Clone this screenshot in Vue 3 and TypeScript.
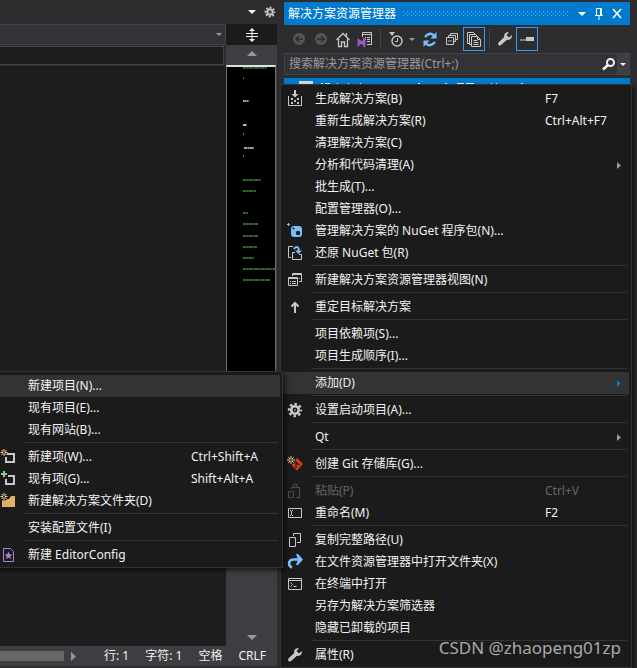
<script setup lang="ts">
interface MenuEntry {
  label: string
  icon?: string
  keys?: string
  disabled?: boolean
  more?: boolean
  active?: boolean
  children?: MenuEntry[][]
}

const addMenu: MenuEntry[][] = [
  [
    { label: '新建项目(N)...', active: true },
    { label: '现有项目(E)...' },
    { label: '现有网站(B)...' },
  ],
  [
    { label: '新建项(W)...', icon: 'new-item', keys: 'Ctrl+Shift+A' },
    { label: '现有项(G)...', icon: 'existing-item', keys: 'Shift+Alt+A' },
    { label: '新建解决方案文件夹(D)', icon: 'new-folder' },
  ],
  [{ label: '安装配置文件(I)' }],
  [{ label: '新建 EditorConfig', icon: 'editorconfig' }],
]

const mainMenu: MenuEntry[][] = [
  [
    { label: '生成解决方案(B)', icon: 'build', keys: 'F7' },
    { label: '重新生成解决方案(R)', keys: 'Ctrl+Alt+F7' },
    { label: '清理解决方案(C)' },
    { label: '分析和代码清理(A)', more: true },
    { label: '批生成(T)...' },
    { label: '配置管理器(O)...' },
    { label: '管理解决方案的 NuGet 程序包(N)...', icon: 'nuget' },
    { label: '还原 NuGet 包(R)', icon: 'restore' },
  ],
  [{ label: '新建解决方案资源管理器视图(N)', icon: 'new-view' }],
  [{ label: '重定目标解决方案', icon: 'up' }],
  [{ label: '项目依赖项(S)...' }, { label: '项目生成顺序(I)...' }],
  [{ label: '添加(D)', more: true, active: true, children: addMenu }],
  [{ label: '设置启动项目(A)...', icon: 'gear' }],
  [{ label: 'Qt', more: true }],
  [{ label: '创建 Git 存储库(G)...', icon: 'git' }],
  [
    { label: '粘贴(P)', icon: 'paste', keys: 'Ctrl+V', disabled: true },
    { label: '重命名(M)', icon: 'rename', keys: 'F2' },
  ],
  [
    { label: '复制完整路径(U)', icon: 'copy' },
    { label: '在文件资源管理器中打开文件夹(X)', icon: 'open' },
    { label: '在终端中打开', icon: 'terminal' },
    { label: '另存为解决方案筛选器' },
    { label: '隐藏已卸载的项目' },
  ],
  [{ label: '属性(R)', icon: 'wrench' }],
]

/* Code overview marks: x, y, width, colour */
const marks: [number, number, number, string][] = [
  [16, 0, 24, '#2f5a2b'],
  [16, 10, 1, '#3f7a3a'],
  [16, 33, 6, '#b58f80'],
  [16, 57, 4, '#b8b8b8'],
  [16, 66, 1, '#777777'],
  [17, 80, 10, '#b59a90'],
  [16, 88, 1, '#777777'],
  [16, 112, 18, '#2f6a2b'],
  [16, 123, 13, '#2f6a2b'],
  [16, 145, 5, '#2f6a2b'],
  [16, 156, 15, '#2f6a2b'],
  [16, 168, 15, '#2f6a2b'],
  [16, 179, 14, '#2f6a2b'],
  [16, 190, 11, '#2f6a2b'],
  [16, 201, 32, '#2f6a2b'],
  [16, 212, 27, '#2f6a2b'],
]
</script>

<template>
  <svg class="defs" aria-hidden="true">
    <symbol id="i-build" viewBox="0 0 16 16">
      <path d="M1.500 5v9.500h13V5" fill="none" stroke="#c8c8c8" />
      <path d="M7 -1h2v4h2.500L8 6.500 4.500 3H7zM4 7h2v2H4zM10 7h2v2h-2zM7 9h2v2H7zM4 11h2v2H4zM10 11h2v2h-2z" fill="#c8c8c8" />
    </symbol>
    <symbol id="i-nuget" viewBox="0 0 16 16">
      <path d="M7 3h5q3 0 3 3v5q0 3-3 3H7q-3 0-3-3V6q0-3 3-3z" fill="#75beff" />
      <circle cx="11" cy="10" r="2.200" fill="#1b1b1c" /><circle cx="6.500" cy="5.500" r="1" fill="#1b1b1c" />
      <path d="M1.500 0v3M0 1.500h3" stroke="#75beff" />
    </symbol>
    <symbol id="i-restore" viewBox="0 0 16 16">
      <path d="M6 1.500H1.500v11H4M8 7.500H5.500v7h9v-5H12" fill="none" stroke="#c8c8c8" />
      <path d="M7 4q2-3 4-1.500Q12 3.500 11.500 6" fill="none" stroke="#75beff" stroke-width="2" />
      <path d="M8 5.500h7l-3.500 3.500z" fill="#75beff" />
    </symbol>
    <symbol id="i-new-view" viewBox="0 0 16 16">
      <path d="M5.500 4V1.500h9v8H12M1.500 5.500h9v8h-9z" fill="none" stroke="#c8c8c8" />
      <path d="M5 2.500h10M1 6.500h10M3 9.500h1M5 9.500h4M3 11.500h1M5 11.500h4M12 6.500h1" stroke="#c8c8c8" />
    </symbol>
    <symbol id="i-up" viewBox="0 0 16 16">
      <path d="M8 14V4M4.500 7.500L8 4l3.500 3.500" fill="none" stroke="#c8c8c8" stroke-width="2" />
    </symbol>
    <symbol id="i-gear" viewBox="0 0 16 16">
      <circle cx="8" cy="8" r="3.700" fill="none" stroke="#c8c8c8" stroke-width="2.600" />
      <circle cx="8" cy="8" r="6" fill="none" stroke="#c8c8c8" stroke-width="2.400" stroke-dasharray="2.500 2.212" stroke-dashoffset="1.250" />
      <circle cx="8" cy="8" r="0.800" fill="#c8c8c8" />
    </symbol>
    <symbol id="i-git" viewBox="0 0 16 16">
      <path d="M10 2l6 6-6 6.500L4.500 9z" fill="#dd3a1c" />
      <path d="M9 5v7M9.500 7l3 2" stroke="#1b1b1c" stroke-width="1.300" />
      <circle cx="4" cy="4" r="4.500" fill="#1b1b1c" />
      <path d="M4 0v8M0 4h8M1.200 1.200l5.600 5.600M6.800 1.200L1.200 6.800" stroke="#ffcc8a" />
      <circle cx="4" cy="4" r="1" fill="#1b1b1c" />
    </symbol>
    <symbol id="i-paste" viewBox="0 0 16 16">
      <path d="M1.500 8.500h5v6h-5zM4.500 6V4.500h8v10H9M6.500 4V2.500h1V1h2v1.500h1V4" fill="none" stroke="#4c4c4c" />
    </symbol>
    <symbol id="i-rename" viewBox="0 0 16 16">
      <path d="M1.500 3.500h13v9h-13zM3 5.500h1M5 5.500h1M4.500 6v4M3 10.500h1M5 10.500h1" fill="none" stroke="#c8c8c8" />
    </symbol>
    <symbol id="i-copy" viewBox="0 0 16 16">
      <path d="M2.500 5.500h6v9h-6zM6.500 4V1.500h7v9H10" fill="none" stroke="#c8c8c8" />
    </symbol>
    <symbol id="i-open" viewBox="0 0 16 16">
      <path d="M5 13.500C1 12 1 6 6 5.500h6" fill="none" stroke="#75beff" stroke-width="2.600" />
      <path d="M9 0h2l5 5.500-5 5.500H9l2-5.500z" fill="#75beff" />
    </symbol>
    <symbol id="i-terminal" viewBox="0 0 16 16">
      <path d="M1.500 2.500h13v11h-13zM1 4.500h14M3.500 6.500l2 2-2 2M6.500 10.500h3" fill="none" stroke="#c8c8c8" />
    </symbol>
    <symbol id="i-wrench" viewBox="0 0 16 16">
      <path d="M14.600 4L12 6.500 9.500 4 12 1.400C9.500.4 6.500 2.500 7.200 6L1.500 11.500q-1 1.500 0 2.500t2.500 0L10 8.800C13.500 9.500 15.600 6.500 14.600 4z" fill="#c8c8c8" />
    </symbol>
    <symbol id="i-new-item" viewBox="0 0 16 16">
      <path d="M7 5h7v8H6V8" fill="none" stroke="#c8c8c8" stroke-width="2" />
      <path d="M4 0v7M.5 3.500h7M1.500 1l5 5M6.500 1l-5 5" stroke="#ffcc8a" />
      <circle cx="4" cy="3.500" r="1" fill="#1b1b1c" />
    </symbol>
    <symbol id="i-existing-item" viewBox="0 0 16 16">
      <path d="M8 5h6v8H6V8" fill="none" stroke="#c8c8c8" stroke-width="2" />
      <path d="M4 0v6M1 3h6" stroke="#89d185" stroke-width="2" />
    </symbol>
    <symbol id="i-new-folder" viewBox="0 0 16 16">
      <path d="M2 6h7l2-3h4v11H2z" fill="#dcb067" />
      <circle cx="4" cy="3.500" r="4" fill="#1b1b1c" />
      <path d="M4 0v7M.5 3.500h7M1.500 1l5 5M6.500 1l-5 5" stroke="#ffcc8a" />
      <circle cx="4" cy="3.500" r="1" fill="#1b1b1c" />
    </symbol>
    <symbol id="i-editorconfig" viewBox="0 0 16 16">
      <path d="M3.500 1.500h7l3 3v10h-10z" fill="none" stroke="#b180d7" />
      <path d="M8.500 4.500l1.200 2.700 2.800.2-2.200 1.800.8 2.800-2.600-1.600-2.600 1.600.8-2.800-2.200-1.800 2.800-.2z" fill="#b180d7" />
    </symbol>
  </svg>

  <main class="ide">
    <section class="editor">
      <header class="tabs">
        <button type="button" class="bare" aria-label="Tabs"><svg width="8" height="4"><path d="M0 0h8L4 4z" fill="#f1f1f1" /></svg></button>
        <button type="button" class="bare" aria-label="Options"><svg width="12" height="12"><use href="#i-gear" /></svg></button>
      </header>
      <div class="editor-body">
        <div class="code">
          <button type="button" class="scope" aria-label="Scope"><svg width="6" height="3"><path d="M0 0h6L3 3z" fill="#999" /></svg></button>
          <div class="field"></div>
          <div class="text"></div>
        </div>
        <div class="overview">
          <button type="button" class="split" aria-label="Split">
            <svg width="12" height="14"><path d="M0 5.500h12M0 8.500h12M6 2v10" fill="none" stroke="#f1f1f1" /><path d="M6 0l3 3H3zM6 14l3-3H3z" fill="#f1f1f1" /></svg>
          </button>
          <button type="button" class="arrow" aria-label="Up"><svg width="10" height="5"><path d="M5 0l5 5H0z" fill="#999" /></svg></button>
          <div class="map">
            <svg width="48" height="300">
              <template v-for="(m, i) in marks" :key="i">
                <rect :x="m[0]" :y="m[1]" :width="m[2]" height="2" :fill="m[3]" opacity="0.6" />
                <line :x1="m[0]" :x2="m[0] + m[2]" :y1="m[1] + 1" :y2="m[1] + 1" :stroke="m[3]" stroke-width="2" stroke-dasharray="3 1 1 1" />
              </template>
            </svg>
          </div>
          <button type="button" class="arrow low" aria-label="Down"><svg width="10" height="5"><path d="M0 0h10L5 5z" fill="#999" /></svg></button>
        </div>
      </div>
      <footer class="status">
        <div class="thumb"></div>
        <svg class="right" width="5" height="9"><path d="M0 0l5 4.500L0 9z" fill="#999" /></svg>
        <span class="cell">行: 1</span><span class="cell">字符: 1</span><span class="cell">空格</span><span>CRLF</span>
      </footer>
    </section>

    <section class="explorer">
      <header class="title">
        <h1>解决方案资源管理器</h1>
        <svg class="grip" height="6">
          <defs><pattern id="dots" width="4" height="4" patternUnits="userSpaceOnUse"><path d="M0 0h1v1H0zM2 2h1v1H2z" fill="#59a8de" /></pattern></defs>
          <rect width="100%" height="5" fill="url(#dots)" />
        </svg>
        <button type="button" class="bare" aria-label="Menu"><svg width="8" height="4"><path d="M0 0h8L4 4z" fill="#fff" /></svg></button>
        <button type="button" class="bare" aria-label="Pin"><svg width="8" height="12"><path d="M1.500 7V.5h5V7M5.500 0v7M0 7.500h8M4 8v4" fill="none" stroke="#fff" /></svg></button>
        <button type="button" class="bare" aria-label="Close"><svg width="10" height="9"><path d="M1 0l8 9M9 0L1 9" stroke="#fff" stroke-width="1.600" /></svg></button>
      </header>
      <div class="tools">
        <button type="button" aria-label="Back" class="tool"><svg width="14" height="14"><circle cx="7" cy="7" r="6" fill="#555558" /><path d="M11 7H4M7 4L4 7l3 3" fill="none" stroke="#2d2d30" stroke-width="1.500" /></svg></button>
        <button type="button" aria-label="Forward" class="tool"><svg width="14" height="14"><circle cx="7" cy="7" r="6" fill="#555558" /><path d="M3 7h7M7 4l3 3-3 3" fill="none" stroke="#2d2d30" stroke-width="1.500" /></svg></button>
        <button type="button" aria-label="Home" class="tool"><svg width="14" height="15"><path d="M.5 8L7 1.500 13.500 8M2.500 7v7.500h3V10h3v4.500h3V7M10.500 4V1" fill="none" stroke="#c8c8c8" stroke-width="1.300" /></svg></button>
        <button type="button" aria-label="Switch views" class="tool"><svg width="16" height="15"><path d="M5.500 5V.5h9v12H10M5 2.500h10M8 5.500h1M10 5.500h3M8 7.500h1M10 7.500h3M10 9.500h3" fill="none" stroke="#c8c8c8" /><path d="M1.500 8v5l6-5v5zM7 6v9" fill="none" stroke="#9b5ccc" stroke-width="1.800" /></svg></button>
        <i class="divider"></i>
        <button type="button" aria-label="Pending changes" class="tool"><svg width="14" height="15"><path d="M0 0h6L3 4z" fill="#c8c8c8" /><circle cx="8" cy="9" r="5" fill="none" stroke="#c8c8c8" stroke-width="1.400" /><path d="M8.500 6v3.500H6" fill="none" stroke="#c8c8c8" /></svg></button>
        <svg class="caret" width="6" height="3"><path d="M0 0h6L3 3z" fill="#999" /></svg>
        <button type="button" aria-label="Refresh" class="tool"><svg width="14" height="15"><path d="M2 5q5-6 9.500-1M12 10q-5 6-9.500 1" fill="none" stroke="#75beff" stroke-width="2.400" /><path d="M13.500 0v6.500H7.500zM.5 15V8.500h6z" fill="#75beff" /></svg></button>
        <button type="button" aria-label="Collapse" class="tool"><svg width="12" height="12"><path d="M4.500 3V.5h7v6H9M2.500 5V2.500h7v6H7.500M.5 4.500h7v7h-7z" fill="none" stroke="#c8c8c8" /><path d="M2 8h4" stroke="#75beff" /></svg></button>
        <button type="button" aria-label="Show all files" class="tool on"><svg width="16" height="15"><path d="M3 11.500H1.500V.5h6l2 2M5 12.500H3.500v-10h6l2 2" fill="none" stroke="#c8c8c8" /><path d="M5.500 4.500h6l3 3v7h-9zM11.500 4.500v3h3M7.500 8.500h4M7.500 10.500h5M7.500 12.500h5" fill="none" stroke="#c8c8c8" /></svg></button>
        <i class="divider"></i>
        <button type="button" aria-label="Properties" class="tool"><svg width="16" height="16"><use href="#i-wrench" /></svg></button>
        <button type="button" aria-label="Preview" class="tool on"><svg width="14" height="4"><path d="M6 0h8v4H6zM0 2.500h8v1H0z" fill="#c8c8c8" /></svg></button>
      </div>
      <label class="search">
        <input type="text" placeholder="搜索解决方案资源管理器(Ctrl+;)" aria-label="搜索解决方案资源管理器" />
        <svg width="13" height="12"><circle cx="8.500" cy="4.500" r="3.500" fill="none" stroke="#f1f1f1" stroke-width="2" /><path d="M6 7l-5 4.500" stroke="#f1f1f1" stroke-width="2.600" /></svg>
        <span class="drop"><svg width="6" height="3"><path d="M0 0h6L3 3z" fill="#f1f1f1" /></svg></span>
      </label>
      <div class="node">
        <svg width="260" height="6"><path d="M15 3h14v3H15z" fill="#d8d8d8" /><path d="M37 5.500h2m2 0h5m7 0h1m10 0h1m11 0h1m57 0h2m25 0h2m10 0h7m2 0h8m17 0h1m4 0h1m24 0h2" stroke="#d5e8f6" /></svg>
      </div>
    </section>

    <ul class="menu">
      <template v-for="(group, g) in mainMenu" :key="g">
        <li v-if="g" class="rule" role="separator"></li>
        <li v-for="item in group" :key="item.label" class="entry">
          <button type="button" class="item" :class="{ active: item.active }" :disabled="item.disabled">
            <span class="icon"><svg v-if="item.icon" width="16" height="16"><use :href="'#i-' + item.icon" /></svg></span>
            <span class="label">{{ item.label }}</span>
            <span class="keys">{{ item.keys }}</span>
            <svg v-if="item.more" class="more" width="4" height="7"><path d="M0 0l4 3.500L0 7z" :fill="item.active ? '#007acc' : '#999'" /></svg>
          </button>
          <ul v-if="item.children" class="menu sub">
            <template v-for="(part, p) in item.children" :key="p">
              <li v-if="p" class="rule" role="separator"></li>
              <li v-for="child in part" :key="child.label" class="entry">
                <button type="button" class="item" :class="{ active: child.active }">
                  <span class="icon"><svg v-if="child.icon" width="16" height="16"><use :href="'#i-' + child.icon" /></svg></span>
                  <span class="label">{{ child.label }}</span>
                  <span class="keys">{{ child.keys }}</span>
                </button>
              </li>
            </template>
          </ul>
        </li>
      </template>
    </ul>

    <p class="watermark">CSDN @zhaopeng01zp</p>
  </main>
</template>

<style>
body {
  margin: 0;
  background: #2d2d30;
}
</style>

<style scoped>
* {
  box-sizing: border-box;
}
.defs {
  position: absolute;
  width: 0;
  height: 0;
}
symbol,
svg {
  overflow: visible;
  flex: none;
}
button {
  border: 0;
  padding: 0;
  margin: 0;
  background: none;
  color: inherit;
  font: inherit;
}
.ide {
  position: relative;
  display: grid;
  grid-template-columns: minmax(0, 277fr) minmax(0, 346fr);
  column-gap: 7px;
  padding-right: 7px;
  height: 100vh;
  overflow: hidden;
  background: #2d2d30;
  color: #f1f1f1;
  font: 12px/16px "Noto Sans", "Noto Sans CJK SC", sans-serif;
}
.editor {
  display: flex;
  flex-direction: column;
  padding-bottom: 2px;
}
.tabs {
  display: flex;
  align-items: center;
  justify-content: flex-end;
  gap: 8px;
  height: 24px;
  padding: 0 1px;
}
.bare {
  display: flex;
}
.editor-body {
  flex: 1;
  display: flex;
}
.code {
  flex: 1;
  display: flex;
  flex-direction: column;
}
.scope {
  display: flex;
  align-items: center;
  justify-content: flex-end;
  height: 21px;
  padding-right: 3px;
  background: #333337;
  border: 1px solid #434346;
  border-left: 0;
}
.field {
  height: 19px;
  margin: 1px 2px 1px 0;
  background: #1e1e1e;
  border: 1px solid #434346;
  border-left: 0;
}
.text {
  flex: 1;
  background: #1e1e1e;
}
.overview {
  width: 51px;
  display: flex;
  flex-direction: column;
  background: #3e3e42;
}
.split,
.arrow {
  display: flex;
  align-items: center;
  justify-content: center;
  height: 21px;
}
.split {
  background: #1b1b1c;
}
.arrow {
  height: 17px;
}
.map {
  height: 320px;
  margin: 3px 1px 0 0;
  background: #000;
  border: solid #6a6a6a;
  border-width: 0 1px;
  border-top: 2px solid #e0e0e0;
}
.low {
  margin-top: auto;
}
.status {
  display: flex;
  align-items: center;
  height: 20px;
  background: #3e3e42;
  white-space: nowrap;
}
.thumb {
  width: 64px;
  height: 10px;
  background: #686868;
}
.right {
  margin: 0 28px 0 7px;
}
.cell {
  margin-right: 16px;
}
.explorer {
  display: flex;
  flex-direction: column;
  padding-top: 2px;
}
.title {
  display: flex;
  align-items: center;
  gap: 9px;
  height: 23px;
  padding: 0 8px 0 4px;
  background: #007acc;
  color: #fff;
}
h1 {
  margin: 0;
  font-size: 12px;
  font-weight: 400;
  white-space: nowrap;
}
.grip {
  flex: 1;
  min-width: 0;
  margin-left: -2px;
}
.tools {
  display: flex;
  align-items: center;
  height: 28px;
  padding-left: 4px;
}
.tool {
  display: flex;
  align-items: center;
  justify-content: center;
  width: 22px;
  height: 24px;
}
.on {
  border: 1px solid #3399ff;
}
.divider {
  width: 1px;
  height: 20px;
  margin: 0 4px;
  background: #46464a;
}
.caret {
  margin: 0 4px 0 2px;
}
.search {
  display: flex;
  align-items: center;
  height: 22px;
  background: #333337;
  border: 1px solid #434346;
}
.search input {
  flex: 1;
  min-width: 0;
  padding: 0 4px;
  border: 0;
  background: none;
  color: #f1f1f1;
  font: inherit;
  outline: 0;
}
.search input::placeholder {
  color: #999;
  opacity: 1;
}
.drop {
  display: flex;
  align-items: center;
  justify-content: center;
  align-self: stretch;
  width: 12px;
  margin-left: 2px;
  background: #3f3f46;
}
.node {
  height: 6px;
  margin-top: 3px;
  display: flex;
  background: #007acc;
}
.menu {
  position: absolute;
  top: 84px;
  right: 5px;
  width: 352px;
  margin: 0;
  padding: 3px 2px 1px 1px;
  list-style: none;
  background: #1b1b1c;
  border: 1px solid #333337;
  box-shadow: 3px 3px 4px rgba(0, 0, 0, 0.5);
}
.entry {
  position: relative;
}
.item {
  display: flex;
  align-items: center;
  width: 100%;
  height: 22px;
  padding-left: 5px;
  text-align: left;
  white-space: nowrap;
}
.item.active {
  background: #333334;
}
.item:disabled {
  color: #656565;
}
.icon {
  display: flex;
  width: 28px;
}
.label {
  flex: 1;
}
.keys {
  width: 84px;
}
.more {
  margin: 0 8px 0 -12px;
}
.rule {
  height: 1px;
  margin: 1px 2px 3px 29px;
  background: #333337;
}
.sub {
  top: -1px;
  right: calc(100% - 1px);
  width: 290px;
  padding-top: 3px;
}
.sub .keys {
  width: 89px;
}
.watermark {
  position: absolute;
  right: 16px;
  bottom: 8px;
  margin: 0;
  color: #aaa;
  font-size: 17px;
  line-height: 24px;
  white-space: nowrap;
}
</style>
